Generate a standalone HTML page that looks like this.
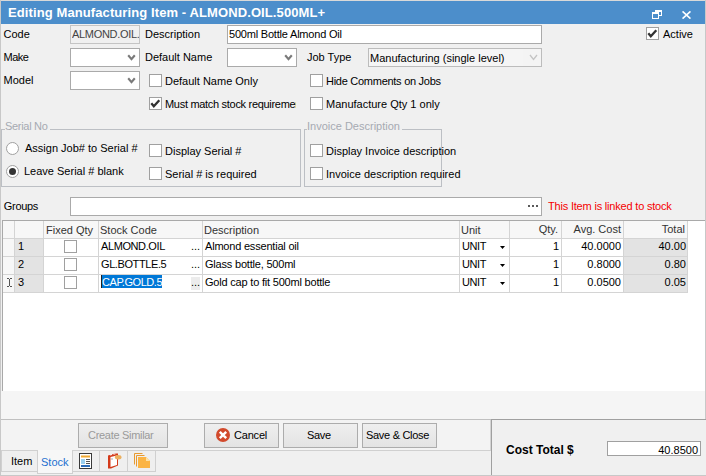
<!DOCTYPE html>
<html><head><meta charset="utf-8">
<style>
*{box-sizing:border-box}
html,body{margin:0;padding:0}
body{width:706px;height:476px;overflow:hidden;position:relative;background:#f0f0f0;font-family:"Liberation Sans",sans-serif;font-size:11px;color:#000}
.a{position:absolute}
.t{position:absolute;white-space:nowrap;line-height:13px;height:13px}
.box{position:absolute;background:#fff;border:1px solid #aaaaaa}
.cb{position:absolute;width:13px;height:13px;background:#fff;border:1px solid #a0a0a0}
.cmb{position:absolute;background:#fff;border:1px solid #aaaaaa}
.chev{position:absolute;width:12px;height:8px}
.grp{position:absolute;border:1px solid #bcbfc4;border-radius:1px}
.gl{position:absolute;color:#a6aab2;background:#f0f0f0;padding:0 2px 0 0;line-height:13px;white-space:nowrap}
.btn{position:absolute;border:1px solid #acacac;background:linear-gradient(#efefef,#e3e3e3)}
</style></head><body>
<!-- window frame -->
<div class="a" style="left:0;top:0;width:706px;height:1px;background:#d9d9d9"></div>
<div class="a" style="left:0;top:0;width:1px;height:476px;background:#c8c8c8"></div>
<div class="a" style="left:705px;top:0;width:1px;height:476px;background:#c8c8c8"></div>
<!-- title bar -->
<div class="a" style="left:1px;top:1px;width:704px;height:23px;background:#4c8ecb"></div>
<div class="t" style="left:8px;top:5px;font-size:13px;font-weight:bold;color:#fff;line-height:15px;height:15px;letter-spacing:0.1px">Editing Manufacturing Item - ALMOND.OIL.500ML+</div>
<div class="a" style="left:655px;top:10px;width:7px;height:2px;background:#fff"></div><div class="a" style="left:661px;top:10px;width:1px;height:6px;background:#fff"></div><div class="a" style="left:659px;top:15px;width:3px;height:1px;background:#fff"></div><div class="a" style="left:655px;top:10px;width:1px;height:2px;background:#fff"></div><div class="a" style="left:652px;top:12px;width:7px;height:2px;background:#fff"></div><div class="a" style="left:652px;top:12px;width:1px;height:7px;background:#fff"></div><div class="a" style="left:658px;top:12px;width:1px;height:7px;background:#fff"></div><div class="a" style="left:652px;top:18px;width:7px;height:1px;background:#fff"></div>
<svg class="a" style="left:682px;top:11px" width="9" height="8" viewBox="0 0 9 8"><path d="M0.5 0.4L8.5 7.6M8.5 0.4L0.5 7.6" stroke="#fff" stroke-width="1.7"/></svg>

<!-- row 1 -->
<div class="t" style="left:3.5px;top:28px">Code</div>
<div class="a" style="left:70px;top:25px;width:70px;height:19px;background:#f0f0f0;border:1px solid #c4c4c4"></div>
<div class="t" style="left:72px;top:28px;color:#444;overflow:hidden;width:67px;letter-spacing:-0.3px">ALMOND.OIL.500ML+</div>
<div class="t" style="left:145px;top:28px">Description</div>
<div class="box" style="left:227px;top:25px;width:315px;height:19px"></div>
<div class="t" style="left:229px;top:28px;letter-spacing:-0.2px">500ml Bottle Almond Oil</div>
<div class="cb" style="left:646px;top:27px"></div>
<svg class="a" style="left:646px;top:27px" width="13" height="13" viewBox="0 0 13 13"><path d="M2.3 6.3L4.8 9.3L10.3 3.2" stroke="#333" stroke-width="2.3" fill="none"/></svg>
<div class="t" style="left:663px;top:28px">Active</div>

<!-- row 2 -->
<div class="t" style="left:3.5px;top:51px;letter-spacing:-0.5px">Make</div>
<div class="cmb" style="left:70px;top:48px;width:70px;height:19px"></div>
<svg class="a" style="left:127px;top:54px" width="9" height="8" viewBox="0 0 9 8"><path d="M1.2 1.3L4.5 5.2L7.8 1.3" stroke="#7a7a7a" stroke-width="2.1" fill="none"/></svg>
<div class="t" style="left:145px;top:51px">Default Name</div>
<div class="cmb" style="left:227px;top:48px;width:70px;height:19px"></div>
<svg class="a" style="left:284px;top:54px" width="9" height="8" viewBox="0 0 9 8"><path d="M1.2 1.3L4.5 5.2L7.8 1.3" stroke="#7a7a7a" stroke-width="2.1" fill="none"/></svg>
<div class="t" style="left:307px;top:51px">Job Type</div>
<div class="a" style="left:368px;top:48px;width:174px;height:19px;background:#f5f5f5;border:1px solid #bcbcbc"></div>
<div class="a" style="left:523px;top:49px;width:18px;height:17px;background:#f4f4f4"></div>
<svg class="a" style="left:529px;top:54px" width="10" height="7" viewBox="0 0 10 7"><path d="M1 1L4.5 5.5L8 1" stroke="#c4c4c4" stroke-width="1.3" fill="none"/></svg>
<div class="t" style="left:370px;top:52px">Manufacturing (single level)</div>

<!-- row 3 -->
<div class="t" style="left:3.5px;top:74px">Model</div>
<div class="cmb" style="left:70px;top:71px;width:70px;height:19px"></div>
<svg class="a" style="left:127px;top:77px" width="9" height="8" viewBox="0 0 9 8"><path d="M1.2 1.3L4.5 5.2L7.8 1.3" stroke="#7a7a7a" stroke-width="2.1" fill="none"/></svg>
<div class="cb" style="left:149px;top:74px"></div>
<div class="t" style="left:165px;top:75px">Default Name Only</div>
<div class="cb" style="left:310px;top:74px"></div>
<div class="t" style="left:326px;top:75px;letter-spacing:-0.27px">Hide Comments on Jobs</div>

<!-- row 4 -->
<div class="cb" style="left:149px;top:97px"></div>
<svg class="a" style="left:149px;top:97px" width="13" height="13" viewBox="0 0 13 13"><path d="M2.3 6.3L4.8 9.3L10.3 3.2" stroke="#333" stroke-width="2.3" fill="none"/></svg>
<div class="t" style="left:165px;top:98px;width:131px;overflow:hidden;letter-spacing:-0.3px">Must match stock requirements</div>
<div class="cb" style="left:310px;top:97px"></div>
<div class="t" style="left:326px;top:98px">Manufacture Qty 1 only</div>

<!-- Serial group -->
<div class="grp" style="left:1px;top:129px;width:300px;height:58px;border-radius:0"></div>
<div class="gl" style="left:5px;top:120px;letter-spacing:-0.3px">Serial No</div>
<div class="a" style="left:6px;top:142px;width:13px;height:13px;border-radius:50%;border:1px solid #a0a0a0;background:#fff"></div>
<div class="t" style="left:25px;top:142px">Assign Job# to Serial #</div>
<div class="a" style="left:6px;top:165px;width:13px;height:13px;border-radius:50%;border:1px solid #a0a0a0;background:#fff"></div>
<div class="a" style="left:9px;top:168px;width:7px;height:7px;border-radius:50%;background:#333"></div>
<div class="t" style="left:24px;top:165px">Leave Serial # blank</div>
<div class="cb" style="left:149px;top:144px"></div>
<div class="t" style="left:165px;top:145px">Display Serial #</div>
<div class="cb" style="left:149px;top:167px"></div>
<div class="t" style="left:165px;top:168px">Serial # is required</div>

<!-- Invoice group -->
<div class="grp" style="left:304px;top:129px;width:138px;height:58px;border-radius:0"></div>
<div class="gl" style="left:307px;top:120px">Invoice Description</div>
<div class="cb" style="left:310px;top:144px"></div>
<div class="t" style="left:326px;top:145px">Display Invoice description</div>
<div class="cb" style="left:310px;top:167px"></div>
<div class="t" style="left:326px;top:168px">Invoice description required</div>

<!-- Groups -->
<div class="t" style="left:3.8px;top:200px;letter-spacing:-0.3px">Groups</div>
<div class="box" style="left:70px;top:197px;width:472px;height:19px"></div>
<div class="a" style="left:528px;top:205px;width:2px;height:2px;background:#5a5a5a"></div><div class="a" style="left:532px;top:205px;width:2px;height:2px;background:#5a5a5a"></div><div class="a" style="left:536px;top:205px;width:2px;height:2px;background:#5a5a5a"></div>
<div class="t" style="left:548px;top:200px;color:#f50000;letter-spacing:-0.19px">This Item is linked to stock</div>

<!-- Grid -->
<div class="a" style="left:2px;top:220px;width:703px;height:171px;background:#fff"></div>
<div class="a" style="left:3px;top:221px;width:684px;height:17px;background:#f7f7f7"></div>
<div class="a" style="left:3px;top:239px;width:11px;height:53px;background:#f7f7f7"></div>
<div class="a" style="left:15px;top:239px;width:28px;height:53px;background:#e3e3e3"></div>
<div class="a" style="left:624px;top:239px;width:63px;height:53px;background:#e3e3e3"></div>
<div class="a" style="left:3px;top:238px;width:685px;height:1px;background:#d4d4d4"></div>
<div class="a" style="left:3px;top:256px;width:685px;height:1px;background:#d4d4d4"></div>
<div class="a" style="left:3px;top:274px;width:685px;height:1px;background:#d4d4d4"></div>
<div class="a" style="left:3px;top:292px;width:685px;height:1px;background:#d4d4d4"></div>
<div class="a" style="left:14px;top:221px;width:1px;height:72px;background:#d4d4d4"></div>
<div class="a" style="left:43px;top:221px;width:1px;height:72px;background:#d4d4d4"></div>
<div class="a" style="left:98px;top:221px;width:1px;height:72px;background:#d4d4d4"></div>
<div class="a" style="left:202px;top:221px;width:1px;height:72px;background:#d4d4d4"></div>
<div class="a" style="left:459px;top:221px;width:1px;height:72px;background:#d4d4d4"></div>
<div class="a" style="left:509px;top:221px;width:1px;height:72px;background:#d4d4d4"></div>
<div class="a" style="left:561px;top:221px;width:1px;height:72px;background:#d4d4d4"></div>
<div class="a" style="left:623px;top:221px;width:1px;height:72px;background:#d4d4d4"></div>
<div class="a" style="left:687px;top:221px;width:1px;height:72px;background:#d4d4d4"></div>
<div class="a" style="left:2px;top:220px;width:703px;height:1px;background:#a9a9a9"></div>
<div class="a" style="left:2px;top:220px;width:1px;height:171px;background:#a9a9a9"></div>

<div class="t" style="left:46px;top:224px;color:#333">Fixed Qty</div>
<div class="t" style="left:100px;top:224px;color:#333">Stock Code</div>
<div class="t" style="left:204px;top:224px;color:#333">Description</div>
<div class="t" style="left:461px;top:224px;color:#333">Unit</div>
<div class="t" style="left:459px;top:223px;width:99px;text-align:right;color:#333">Qty.</div>
<div class="t" style="left:561px;top:223px;width:60px;text-align:right;color:#333">Avg. Cost</div>
<div class="t" style="left:623px;top:223px;width:62px;text-align:right;color:#333">Total</div>
<div class="t" style="left:18px;top:240px">1</div>
<div class="cb" style="left:64px;top:240px"></div>
<div class="t" style="left:101px;top:240px;letter-spacing:-0.4px">ALMOND.OIL</div>
<div class="t" style="left:191px;top:240px">...</div>
<div class="t" style="left:205px;top:240px;letter-spacing:-0.2px">Almond essential oil</div>
<div class="t" style="left:462px;top:240px;letter-spacing:-0.4px">UNIT</div>
<svg class="a" style="left:500px;top:246px" width="6" height="4" viewBox="0 0 6 4"><path d="M0 0H5L2.5 3Z" fill="#000"/></svg>
<div class="t" style="left:509px;top:240px;width:50px;text-align:right">1</div>
<div class="t" style="left:561px;top:240px;width:60px;text-align:right">40.0000</div>
<div class="t" style="left:623px;top:240px;width:63px;text-align:right">40.00</div>
<div class="t" style="left:18px;top:258px">2</div>
<div class="cb" style="left:64px;top:258px"></div>
<div class="t" style="left:101px;top:258px;letter-spacing:-0.4px">GL.BOTTLE.5</div>
<div class="t" style="left:191px;top:258px">...</div>
<div class="t" style="left:205px;top:258px;letter-spacing:-0.2px">Glass bottle, 500ml</div>
<div class="t" style="left:462px;top:258px;letter-spacing:-0.4px">UNIT</div>
<svg class="a" style="left:500px;top:264px" width="6" height="4" viewBox="0 0 6 4"><path d="M0 0H5L2.5 3Z" fill="#000"/></svg>
<div class="t" style="left:509px;top:258px;width:50px;text-align:right">1</div>
<div class="t" style="left:561px;top:258px;width:60px;text-align:right">0.8000</div>
<div class="t" style="left:623px;top:258px;width:63px;text-align:right">0.80</div>
<div class="t" style="left:18px;top:276px">3</div>
<div class="cb" style="left:64px;top:276px"></div>
<div class="a" style="left:191px;top:277px;width:9px;height:13px;background:#ececec"></div>
<div class="a" style="left:101px;top:275px;width:61px;height:13px;background:#0078d7"></div><div class="a" style="left:101px;top:275px;width:1px;height:13px;background:#222"></div>
<div class="t" style="left:102px;top:276px;color:#fff;letter-spacing:-0.45px">CAP.GOLD.5</div>
<div class="t" style="left:191px;top:276px">...</div>
<div class="t" style="left:205px;top:276px;letter-spacing:-0.2px">Gold cap to fit 500ml bottle</div>
<div class="t" style="left:462px;top:276px;letter-spacing:-0.4px">UNIT</div>
<svg class="a" style="left:500px;top:282px" width="6" height="4" viewBox="0 0 6 4"><path d="M0 0H5L2.5 3Z" fill="#000"/></svg>
<div class="t" style="left:509px;top:276px;width:50px;text-align:right">1</div>
<div class="t" style="left:561px;top:276px;width:60px;text-align:right">0.0500</div>
<div class="t" style="left:623px;top:276px;width:63px;text-align:right">0.05</div>
<div class="a" style="left:7px;top:278px;width:2px;height:1px;background:#555"></div><div class="a" style="left:10px;top:278px;width:2px;height:1px;background:#555"></div><div class="a" style="left:9px;top:279px;width:1px;height:7px;background:#555"></div><div class="a" style="left:7px;top:286px;width:2px;height:1px;background:#555"></div><div class="a" style="left:10px;top:286px;width:2px;height:1px;background:#555"></div>
<div class="a" style="left:1px;top:391px;width:704px;height:28px;background:#f5f5f5"></div>
<div class="a" style="left:1px;top:419px;width:704px;height:1px;background:#c0c0c0"></div>
<div class="a" style="left:1px;top:420px;width:490px;height:30px;background:#f3f3f3"></div>
<div class="a" style="left:490px;top:420px;width:1px;height:30px;background:#d4d4d4"></div>
<div class="btn" style="left:78px;top:423px;width:90px;height:25px"></div>
<div class="t" style="left:88px;top:429px;color:#9a9a9a;letter-spacing:-0.3px">Create Similar</div>
<div class="btn" style="left:204px;top:423px;width:75px;height:25px"></div>
<div class="t" style="left:234px;top:429px;letter-spacing:-0.2px">Cancel</div>
<svg class="a" style="left:216px;top:428px" width="14" height="14" viewBox="0 0 14 14"><circle cx="7" cy="7" r="7" fill="#d24a2c"/><path d="M3.8 3.8L10.2 10.2M10.2 3.8L3.8 10.2" stroke="#fff" stroke-width="2.4"/></svg>
<div class="btn" style="left:283px;top:423px;width:75px;height:25px"></div>
<div class="t" style="left:307px;top:429px;letter-spacing:-0.3px">Save</div>
<div class="btn" style="left:362px;top:423px;width:75px;height:25px"></div>
<div class="t" style="left:366px;top:429px;letter-spacing:-0.3px">Save &amp; Close</div>
<div class="a" style="left:1px;top:450px;width:490px;height:1px;background:#d0d0d0"></div>
<div class="a" style="left:1px;top:451px;width:37px;height:21px;background:#efefef;border:1px solid #d0d0d0;border-top:none"></div>
<div class="t" style="left:11px;top:455px">Item</div>
<div class="a" style="left:37px;top:450px;width:36px;height:24px;background:#f7f7f7;border:1px solid #d0d0d0;border-top:none"></div>
<div class="t" style="left:41px;top:456px;color:#1e70d0">Stock</div>
<div class="a" style="left:72px;top:451px;width:28px;height:21px;background:#efefef;border:1px solid #d0d0d0;border-top:none"></div>
<div class="a" style="left:99px;top:451px;width:29px;height:21px;background:#efefef;border:1px solid #d0d0d0;border-top:none"></div>
<div class="a" style="left:127px;top:451px;width:29px;height:21px;background:#efefef;border:1px solid #d0d0d0;border-top:none"></div>
<svg class="a" style="left:79px;top:453px" width="13" height="16" viewBox="0 0 13 16"><rect x="0.5" y="0.5" width="12" height="15" fill="#fff" stroke="#3a3a3a"/><rect x="2" y="2.5" width="9" height="2" fill="#f0a830"/><rect x="2" y="6" width="4" height="5" fill="#9cd0f0"/><rect x="7" y="6" width="4" height="1" fill="#555"/><rect x="7" y="8" width="4" height="1" fill="#555"/><rect x="7" y="10" width="4" height="1" fill="#555"/><rect x="2" y="12" width="9" height="2" fill="#2a6bb8"/></svg>
<svg class="a" style="left:107px;top:453px" width="15" height="16" viewBox="0 0 15 16"><path d="M1 2.5L8 0.5H11V12.5L4 15.5H1Z" fill="#d43a1a"/><path d="M3.5 4L10 2.5V12L3.5 14Z" fill="#fff"/><path d="M3 1.6L5 1V2L3 2.6Z" fill="#fff"/><path d="M6.5 0.8L8.5 0.5V1.3L6.5 1.7Z" fill="#fff"/><ellipse cx="11.2" cy="4.2" rx="3.3" ry="2.2" fill="#eab060"/><rect x="4.5" y="5.5" width="1" height="1" fill="#556"/></svg>
<svg class="a" style="left:134px;top:453px" width="17" height="16" viewBox="0 0 17 16"><path d="M0.5 0.5H8.5M0.5 0.5V11.5" stroke="#e89a30" fill="none"/><path d="M2.5 2.5H10.5M2.5 2.5V13.5" stroke="#e89a30" fill="none"/><path d="M4 4H12L16 8V15H4Z" fill="#fbb444"/><path d="M12 4L16 8H12Z" fill="#fde2a8"/></svg>
<div class="a" style="left:491px;top:419px;width:215px;height:57px;background:#f0f0f0;border-left:1px solid #a0a0a0;border-top:1px solid #a0a0a0"></div>
<div class="t" style="left:506px;top:443px;font-size:12px;font-weight:bold;line-height:14px;height:14px">Cost Total $</div>
<div class="box" style="left:607px;top:441px;width:94px;height:15px;border-color:#a0a0a0"></div>
<div class="t" style="left:607px;top:444px;width:91px;text-align:right">40.8500</div>
<div class="a" style="left:0;top:475px;width:706px;height:1px;background:#c8c8c8"></div>
</body></html>
